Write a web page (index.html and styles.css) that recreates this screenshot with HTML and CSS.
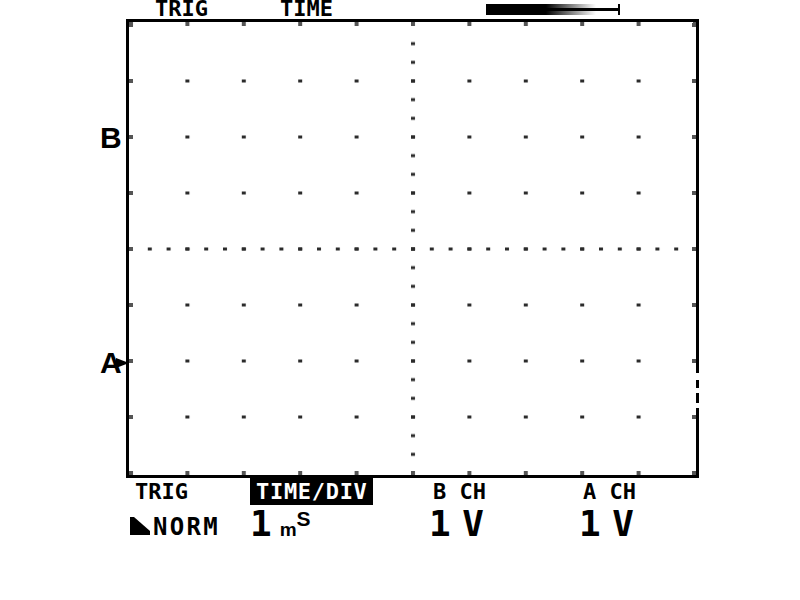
FILE: index.html
```html
<!DOCTYPE html>
<html>
<head>
<meta charset="utf-8">
<link rel="stylesheet" href="styles.css">
</head>
<body>
<div class="scope">
  <header class="top">
    <span class="top-lbl">TRIG</span>
    <span class="top-lbl">TIME</span>
    <div class="bar"></div>
  </header>

  <div class="screen-row">
    <div class="markers">
      <span class="marker marker-b">B</span>
      <span class="marker marker-a">A</span>
    </div>
    <div class="screen">
      <svg class="grid" width="567" height="453" viewBox="0 0 567 453">
        <defs>
          <pattern id="major" patternUnits="userSpaceOnUse" width="56.4" height="56">
            <rect x="0" y="1.5" width="4" height="3" fill="#2b2b2b"/>
          </pattern>
          <pattern id="hsub" patternUnits="userSpaceOnUse" width="18.8" height="56">
            <rect x="0" y="1.5" width="4" height="3" fill="#2b2b2b"/>
          </pattern>
          <pattern id="vsub" patternUnits="userSpaceOnUse" width="56.4" height="18.667">
            <rect x="0" y="1.5" width="4" height="3" fill="#2b2b2b"/>
          </pattern>
          <pattern id="tickt" patternUnits="userSpaceOnUse" x="0" y="0" width="56.4" height="10">
            <rect x="0" y="0" width="4" height="4" fill="#555"/>
          </pattern>
          <pattern id="tickb" patternUnits="userSpaceOnUse" x="0" y="449" width="56.4" height="10">
            <rect x="0" y="0" width="4" height="4" fill="#555"/>
          </pattern>
          <pattern id="tickl" patternUnits="userSpaceOnUse" x="0" y="0" width="10" height="56">
            <rect x="0" y="1" width="4" height="4" fill="#555"/>
          </pattern>
          <pattern id="tickr" patternUnits="userSpaceOnUse" x="563" y="0" width="10" height="56">
            <rect x="0" y="1" width="4" height="4" fill="#555"/>
          </pattern>
        </defs>
        <rect x="40" y="40" width="490" height="380" fill="url(#major)"/>
        <rect x="10" y="220" width="548" height="12" fill="url(#hsub)"/>
        <rect x="280" y="10" width="10" height="433" fill="url(#vsub)"/>
        <rect x="0" y="0" width="567" height="4" fill="url(#tickt)"/>
        <rect x="0" y="449" width="567" height="4" fill="url(#tickb)"/>
        <rect x="0" y="0" width="4" height="453" fill="url(#tickl)"/>
        <rect x="563" y="0" width="4" height="453" fill="url(#tickr)"/>
      </svg>
      <div class="trig-level"></div>
    </div>
  </div>

  <footer class="readout">
    <div class="r1 lbl-trig">TRIG</div>
    <div class="r1"><span class="inv">TIME/DIV</span></div>
    <div class="r1">B CH</div>
    <div class="r1">A CH</div>
    <div class="r2"><svg class="slope" width="20" height="18" viewBox="0 0 20 18"><polygon points="0,0 4,0 20,14 20,18 0,18" fill="#000"/></svg><span class="norm">NORM</span></div>
    <div class="r2"><span class="big">1</span><span class="unit-m">m</span><span class="unit-s">S</span></div>
    <div class="r2"><span class="big val">1 V</span></div>
    <div class="r2"><span class="big val">1 V</span></div>
  </footer>
</div>
</body>
</html>
```

FILE: styles.css
```css
html, body {
  margin: 0;
  padding: 0;
  background: #fff;
}

body {
  font-family: "DejaVu Sans Mono", monospace;
  font-weight: bold;
  color: #000;
}

.scope {
  width: 800px;
  height: 600px;
  overflow: hidden;
}

/* ---------- top strip ---------- */
.top {
  display: grid;
  grid-template-columns: 125px 206px 134px;
  padding-left: 155px;
  height: 19px;
  font-size: 22px;
  line-height: 19px;
}

.top-lbl {
  display: block;
  margin-top: -1px;
}

.bar {
  margin-top: 4px;
  height: 11px;
  width: 134px;
  box-sizing: border-box;
  border-right: 2px solid #000;
  background:
    linear-gradient(#000, #000) 0 4px / 100% 3px no-repeat,
    linear-gradient(90deg, #000 0, #000 60px, #fff 110px);
}

/* ---------- screen ---------- */
.screen-row {
  display: flex;
}

.markers {
  width: 126px;
  height: 459px;
  position: relative;
  font-family: "Liberation Sans", Arial, sans-serif;
  font-size: 30px;
  line-height: 30px;
}

.marker {
  position: absolute;
  left: 100px;
}

.marker-b {
  top: 104px;
}

.marker-a {
  top: 329px;
}

.marker-a::after {
  content: "";
  position: absolute;
  left: 16px;
  top: 10px;
  width: 0;
  height: 0;
  border-left: 13px solid #000;
  border-top: 5px solid transparent;
  border-bottom: 5px solid transparent;
}

.screen {
  width: 567px;
  height: 453px;
  border: 3px solid #000;
  position: relative;
}

.grid {
  display: block;
}

.trig-level {
  position: absolute;
  right: -3px;
  top: 351px;
  width: 3px;
  height: 35px;
  background: linear-gradient(to bottom,
    #fff 0, #fff 7px,
    #000 7px, #000 15px,
    #fff 15px, #fff 20px,
    #000 20px, #000 30px,
    #fff 30px, #fff 35px);
}

/* ---------- readout ---------- */
.readout {
  margin-left: 126px;
  width: 573px;
  box-sizing: border-box;
  padding-left: 4px;
  display: grid;
  grid-template-columns: 120px 183px 150px 1fr;
  grid-template-rows: 28px 34px;
}

.r1 {
  font-size: 22px;
  line-height: 28px;
  white-space: nowrap;
}

.lbl-trig {
  padding-left: 5px;
}

.inv {
  display: inline-block;
  width: 123px;
  height: 27px;
  box-sizing: border-box;
  padding-left: 6px;
  background: #000;
  color: #fff;
  letter-spacing: 0.7px;
  line-height: 27px;
  vertical-align: top;
}

.r2 {
  font-size: 36px;
  line-height: 34px;
  white-space: nowrap;
}

.slope {
  vertical-align: baseline;
  margin-right: 3px;
}

.norm {
  font-size: 24px;
  line-height: 1;
  letter-spacing: 2.3px;
}

.big {
  font-size: 36px;
  line-height: 1;
}

.val {
  letter-spacing: -5px;
  margin-left: -4px;
}

.unit-m {
  font-family: "Liberation Sans", Arial, sans-serif;
  font-size: 19px;
  line-height: 1;
  margin-left: 8px;
}

.unit-s {
  font-family: "Liberation Sans", Arial, sans-serif;
  font-size: 21px;
  line-height: 1;
  vertical-align: 10px;
}
```
